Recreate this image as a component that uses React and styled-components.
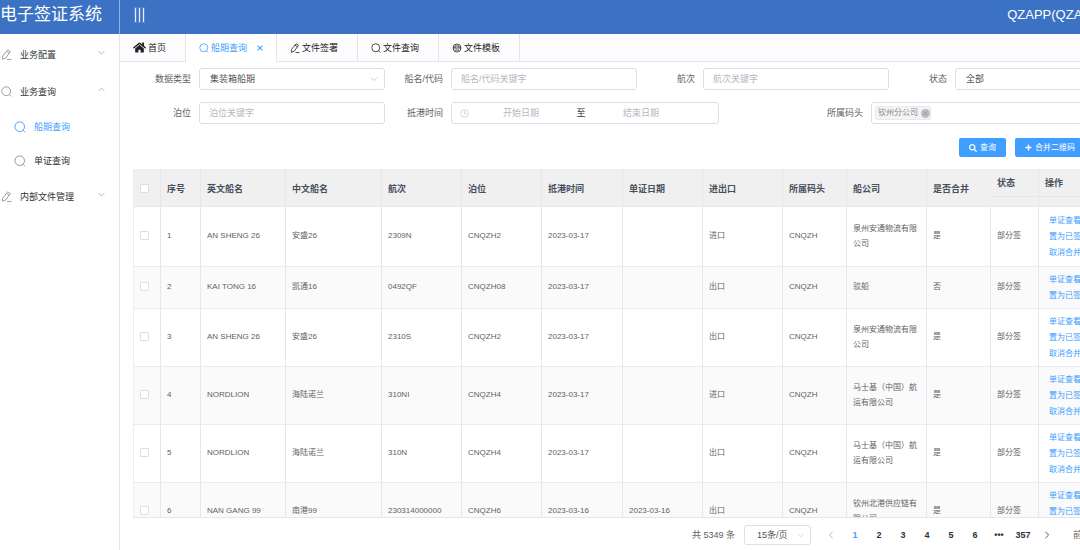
import React from 'react';
import styled, { createGlobalStyle, css } from 'styled-components';
import { FaHome, FaSearch, FaPlus } from 'react-icons/fa';

const GlobalStyle = createGlobalStyle`
  * { box-sizing: border-box; }
  body {
    margin: 0;
    background: #fff;
    color: #303133;
    font-family: "Liberation Sans", "Noto Sans CJK SC", sans-serif;
    font-size: 9px;
    line-height: 16px;
  }
  button, input, select { font: inherit; color: inherit; margin: 0; padding: 0; }
`;

const Shell = styled.div`
  height: 100vh;
  display: flex;
  flex-direction: column;
  overflow: hidden;
`;

const Header = styled.header`
  flex: none;
  display: flex;
  height: 34px;
  min-width: 1141px;
  background: #3b72c4;
  color: #fff;
`;

const Brand = styled.h1`
  flex: none;
  width: 120px;
  margin: 0;
  border-right: 1px solid #8fb2e4;
  font-size: 17px;
  font-weight: 400;
  line-height: 30px;
  white-space: nowrap;
`;

const MenuToggle = styled.button`
  display: flex;
  gap: 3px;
  align-items: center;
  height: 30px;
  margin-left: 15px;
  border: 0;
  background: none;
`;

const Bar = styled.span`
  width: 1px;
  height: 14px;
  background: #e3ecf8;
  outline: 1px solid rgba(255, 255, 255, 0.15);
`;

const UserName = styled.span`
  margin-left: auto;
  padding-right: 37px;
  font-size: 13px;
  line-height: 30px;
`;

const Body = styled.div`
  flex: 1;
  min-height: 0;
  display: flex;
`;

const Sidebar = styled.nav`
  flex: none;
  width: 120px;
  padding-top: 2px;
  border-right: 1px solid #e4e4e8;
`;

const MenuItem = styled.a`
  display: flex;
  align-items: center;
  gap: 8px;
  height: ${(p) => (p.$sub ? '34px' : '37px')};
  padding: ${(p) => (p.$sub ? '0 14px' : '0 14px 0 1px')};
  color: ${(p) => (p.$active ? '#409eff' : '#303133')};
  text-decoration: none;

  svg { color: ${(p) => (p.$active ? '#409eff' : '#909399')}; }
  svg:last-child { margin: 0 0 4px auto; }
  svg:first-child { margin: 0; }
`;

const Main = styled.main`
  flex: 1;
  min-width: 1021px;
  display: flex;
  flex-direction: column;
`;

const TabBar = styled.div`
  flex: none;
  display: flex;
  height: 28px;
  background: #fdfcfe;
  border-bottom: 1px solid #e4e4ea;
`;

const Tab = styled.button`
  display: flex;
  align-items: center;
  gap: 2px;
  height: ${(p) => (p.$active ? '28px' : '27px')};
  padding: ${(p) => (p.$active ? '0 13px' : '0 19px 0 13px')};
  border: 0;
  border-right: 1px solid #e4e4ea;
  background: ${(p) => (p.$active ? '#fff' : 'transparent')};
  color: ${(p) => (p.$active ? '#409eff' : '#222')};

  svg:last-child { margin-left: 8px; }
`;

const Content = styled.div`
  flex: 1;
  min-height: 0;
  display: flex;
  flex-direction: column;
  padding: 6px 0 0 13px;
`;

const Form = styled.form`
  flex: none;
  display: flex;
  flex-direction: column;
  gap: 12px;
`;

const FormRow = styled.div`
  display: grid;
  grid-template-columns: ${(p) => p.$columns};
`;

const Field = styled.div`
  display: grid;
  grid-template-columns: ${(p) => (p.$wide ? '144px' : '58px')} minmax(0, 1fr);
  column-gap: 8px;
  align-items: center;
`;

const Label = styled.label`
  padding-bottom: 1px;
  text-align: right;
  color: #606266;
`;

const box = css`
  width: 100%;
  height: 22px;
  border: 1px solid #dcdfe6;
  border-radius: 3px;
  background: #fff;
`;

const TextInput = styled.input`
  ${box}
  padding: 0 9px;
  &::placeholder { color: #b4b8c0; }
`;

const SelectWrap = styled.div`
  display: grid;
  align-items: center;

  select, svg { grid-area: 1 / 1; }
  svg { justify-self: end; margin-right: 7px; color: #c0c4cc; pointer-events: none; }
`;

const Select = styled.select`
  ${box}
  height: ${(p) => (p.$small ? '20px' : '22px')};
  padding: 0 ${(p) => (p.$small ? '12px' : '10px')};
  appearance: none;
  color: #505256;
`;

const DateRange = styled.div`
  ${box}
  display: flex;
  align-items: center;
  padding-left: 8px;
  svg { color: #c0c4cc; }
`;

const DateInput = styled.input`
  width: 104px;
  border: 0;
  background: none;
  text-align: center;
  &::placeholder { color: #b4b8c0; }
`;

const DateSeparator = styled.span`
  width: 16px;
  text-align: center;
`;

const TagBox = styled.div`
  ${box}
  display: flex;
  align-items: center;
  padding-left: 3px;
`;

const Tag = styled.span`
  display: flex;
  align-items: center;
  gap: 3px;
  height: 14px;
  padding: 0 0 0 2px;
  border: 1px solid #e9e9eb;
  border-radius: 2px;
  background: #f4f4f5;
  color: #85888e;
  font-size: 8px;
`;

const TagClose = styled.button`
  display: grid;
  place-items: center;
  width: 9px;
  height: 9px;
  border: 0;
  border-radius: 50%;
  background: #b9bdc6;
  color: #8f939b;
`;

const Actions = styled.div`
  grid-column: 4;
  display: flex;
  gap: 9px;
  padding: 2px 0 0 70px;
`;

const ActionButton = styled.button`
  flex: none;
  display: flex;
  align-items: center;
  gap: 3px;
  height: 19px;
  padding: 0 10px;
  border: 0;
  border-radius: 2px;
  background: #409eff;
  color: #fff;
  font-size: 8px;
`;

const TableArea = styled.div`
  flex: 1;
  min-height: 0;
  margin-top: 12px;
  overflow: hidden;
  border-left: 1px solid #ebeef5;
  border-bottom: 1px solid #e4e6ea;
`;

const Table = styled.table`
  width: 100%;
  min-width: 1007px;
  table-layout: fixed;
  border-collapse: separate;
  border-spacing: 0;
  color: #606266;
  font-size: 8px;
`;

const HeadCell = styled.th`
  height: 38px;
  padding: 2px 6px 0;
  border-right: 1px solid #e6e7ea;
  border-bottom: 1px solid #e6e7ea;
  background: #f0f0f1;
  color: #474f5c;
  font-size: 9px;
  text-align: left;
  white-space: nowrap;

  ${(p) => p.$fixed && css`
    padding: 0 0 9px;
    vertical-align: top;
  `}
  ${(p) => p.$open && css`border-right-color: #f0f0f1;`}
`;

const FixedLabel = styled.div`
  height: 28px;
  padding: 0 6px;
  border-bottom: 1px solid #e6e7ea;
  line-height: 28px;
`;

const Row = styled.tr`
  height: ${(p) => p.$height}px;
  background: ${(p) => (p.$striped ? '#fafafa' : '#fff')};
`;

const Cell = styled.td`
  padding: ${(p) => (p.$links ? '0 10px' : '0 6px 2px')};
  border-right: 1px solid #e6e7ea;
  border-bottom: 1px solid #ebecf2;
  line-height: ${(p) => (p.$links ? '16px' : '15px')};
`;

const Check = styled.input`
  display: block;
  appearance: none;
  width: 9px;
  height: 9px;
  border: 1px solid #dcdfe6;
  border-radius: 1px;
  background: #fff;
`;

const RowLink = styled.a`
  display: block;
  color: #409eff;
  text-decoration: none;
  white-space: nowrap;
`;

const Pager = styled.div`
  flex: none;
  display: flex;
  align-items: center;
  height: 32px;
  padding: 2px 0 0 559px;
  color: #606266;
  white-space: nowrap;
`;

const PageSize = styled.div`
  width: 67px;
  margin: 0 8px 0 9px;
`;

const PageButton = styled.button`
  flex: none;
  display: grid;
  place-items: center;
  width: 24px;
  height: 20px;
  border: 0;
  background: none;
  color: ${(p) => (p.$active ? '#409eff' : p.$muted ? '#a0a4ac' : '#303133')};
  font-weight: 700;
`;

const Jump = styled.span`
  margin-left: 14px;
`;

const Icon = ({ size = 10, children }) => (
  <svg width={size} height={size} viewBox="0 0 20 20" fill="none" stroke="currentColor" strokeWidth="1.6" aria-hidden="true">
    {children}
  </svg>
);

const SearchIcon = ({ size }) => (
  <Icon size={size}>
    <circle cx="9.5" cy="9.5" r="8" />
    <path d="M15 15.5 18.5 19" />
  </Icon>
);

const EditIcon = ({ size }) => (
  <Icon size={size}>
    <path d="M12 1.5 17 4.5 8.5 16.5 2.5 18.5 3 13Z M10 4.5 15 7.5 M11 19H19" />
  </Icon>
);

const TemplateIcon = ({ size }) => (
  <Icon size={size}>
    <circle cx="10" cy="10" r="8" />
    <path d="M2 10H18M6 10V6H14V10M6 14H14" />
  </Icon>
);

const ClockIcon = () => (
  <Icon size={9}>
    <circle cx="10" cy="10" r="8.5" />
    <path d="M10 4.5V10.5H15" />
  </Icon>
);

const Chevron = ({ dir = 'down', size = 8 }) => {
  const paths = {
    down: 'M2 6 10 14 18 6',
    up: 'M2 14 10 6 18 14',
    left: 'M14 2 6 10 14 18',
    right: 'M6 2 14 10 6 18',
  };
  return <Icon size={size}><path d={paths[dir]} strokeWidth="2" /></Icon>;
};

const CloseIcon = ({ size = 6 }) => (
  <Icon size={size}><path d="M2 2 18 18M18 2 2 18" strokeWidth="3.5" /></Icon>
);

const columns = [
  { width: 27 },
  { width: 40, title: '序号' },
  { width: 85, title: '英文船名' },
  { width: 96, title: '中文船名' },
  { width: 80, title: '航次' },
  { width: 80, title: '泊位' },
  { width: 81, title: '抵港时间' },
  { width: 80, title: '单证日期' },
  { width: 80, title: '进出口' },
  { width: 64, title: '所属码头' },
  { width: 80, title: '船公司' },
  { width: 64, title: '是否合并' },
  { width: 48, title: '状态', fixed: true },
  { width: 102, title: '操作', fixed: true },
];

const rows = [
  [60, 'AN SHENG 26', '安盛26', '2309N', 'CNQZH2', '2023-03-17', '', '进口', '泉州安通物流有限公司', '是'],
  [42, 'KAI TONG 16', '凯通16', '0492QF', 'CNQZH08', '2023-03-17', '', '出口', '驳船', '否'],
  [58, 'AN SHENG 26', '安盛26', '2310S', 'CNQZH2', '2023-03-17', '', '出口', '泉州安通物流有限公司', '是'],
  [58, 'NORDLION', '海陆诺兰', '310NI', 'CNQZH4', '2023-03-17', '', '进口', '马士基（中国）航运有限公司', '是'],
  [58, 'NORDLION', '海陆诺兰', '310N', 'CNQZH4', '2023-03-17', '', '出口', '马士基（中国）航运有限公司', '是'],
  [58, 'NAN GANG 99', '南港99', '230314000000', 'CNQZH6', '2023-03-16', '2023-03-16', '出口', '钦州北港供应链有限公司', '是'],
];

function ShipTable() {
  return (
    <TableArea>
      <Table>
        <colgroup>
          {columns.map((c, i) => <col key={i} width={c.width} />)}
        </colgroup>
        <thead>
          <tr>
            {columns.map((c, i) => (
              <HeadCell key={i} $fixed={c.fixed} $open={c.title === '是否合并'}>
                {i === 0 ? <Check type="checkbox" aria-label="全选" />
                  : c.fixed ? <FixedLabel>{c.title}</FixedLabel> : c.title}
              </HeadCell>
            ))}
          </tr>
        </thead>
        <tbody>
          {rows.map(([height, en, cn, voyage, berth, arrival, docDate, io, company, merged], i) => (
            <Row key={i} $height={height} $striped={i % 2 === 1}>
              <Cell><Check type="checkbox" aria-label={`选择 ${en}`} /></Cell>
              <Cell>{i + 1}</Cell>
              <Cell>{en}</Cell>
              <Cell>{cn}</Cell>
              <Cell>{voyage}</Cell>
              <Cell>{berth}</Cell>
              <Cell>{arrival}</Cell>
              <Cell>{docDate}</Cell>
              <Cell>{io}</Cell>
              <Cell>CNQZH</Cell>
              <Cell>{company}</Cell>
              <Cell>{merged}</Cell>
              <Cell>部分签</Cell>
              <Cell $links>
                <RowLink href="#docs">单证查看</RowLink>
                <RowLink href="#signed">置为已签</RowLink>
                {merged === '是' && <RowLink href="#unmerge">取消合并</RowLink>}
              </Cell>
            </Row>
          ))}
        </tbody>
      </Table>
    </TableArea>
  );
}

export default function App() {
  return (
    <Shell>
      <GlobalStyle />
      <Header>
        <Brand>电子签证系统</Brand>
        <MenuToggle type="button" aria-label="菜单"><Bar /><Bar /><Bar /></MenuToggle>
        <UserName>QZAPP(QZAPP)</UserName>
      </Header>
      <Body>
        <Sidebar>
          <MenuItem href="#config"><EditIcon size={11} />业务配置<Chevron size={7} /></MenuItem>
          <MenuItem href="#query"><SearchIcon size={11} />业务查询<Chevron size={7} dir="up" /></MenuItem>
          <MenuItem href="#ships" $sub $active><SearchIcon size={12} />船期查询</MenuItem>
          <MenuItem href="#certs" $sub><SearchIcon size={12} />单证查询</MenuItem>
          <MenuItem href="#files"><EditIcon size={11} />内部文件管理<Chevron size={7} /></MenuItem>
        </Sidebar>
        <Main>
          <TabBar>
            <Tab type="button"><FaHome size={13} /><span>首页</span></Tab>
            <Tab type="button" $active><SearchIcon /><span>船期查询</span><CloseIcon /></Tab>
            <Tab type="button"><EditIcon /><span>文件签署</span></Tab>
            <Tab type="button"><SearchIcon /><span>文件查询</span></Tab>
            <Tab type="button"><TemplateIcon /><span>文件模板</span></Tab>
          </TabBar>
          <Content>
            <Form>
              <FormRow $columns="repeat(4, minmax(252px, 1fr))">
                <Field>
                  <Label htmlFor="type">数据类型</Label>
                  <SelectWrap><Select id="type"><option>集装箱船期</option></Select><Chevron /></SelectWrap>
                </Field>
                <Field>
                  <Label htmlFor="ship">船名/代码</Label>
                  <TextInput id="ship" placeholder="船名/代码关键字" />
                </Field>
                <Field>
                  <Label htmlFor="voyage">航次</Label>
                  <TextInput id="voyage" placeholder="航次关键字" />
                </Field>
                <Field>
                  <Label htmlFor="status">状态</Label>
                  <SelectWrap><Select id="status"><option>全部</option></Select><Chevron /></SelectWrap>
                </Field>
              </FormRow>
              <FormRow $columns="minmax(252px, 1fr) 334px minmax(422px, 2fr)">
                <Field>
                  <Label htmlFor="berth">泊位</Label>
                  <TextInput id="berth" placeholder="泊位关键字" />
                </Field>
                <Field>
                  <Label htmlFor="from">抵港时间</Label>
                  <DateRange>
                    <ClockIcon />
                    <DateInput id="from" placeholder="开始日期" />
                    <DateSeparator>至</DateSeparator>
                    <DateInput aria-label="结束日期" placeholder="结束日期" />
                  </DateRange>
                </Field>
                <Field $wide>
                  <Label as="span">所属码头</Label>
                  <TagBox>
                    <Tag>钦州分公司<TagClose type="button" aria-label="移除"><CloseIcon size={5} /></TagClose></Tag>
                  </TagBox>
                </Field>
              </FormRow>
              <FormRow $columns="repeat(4, minmax(252px, 1fr))">
                <Actions>
                  <ActionButton type="button"><FaSearch size={8} />查询</ActionButton>
                  <ActionButton type="button"><FaPlus size={7} />合并二维码</ActionButton>
                </Actions>
              </FormRow>
            </Form>
            <ShipTable />
            <Pager>
              <span>共 5349 条</span>
              <PageSize>
                <SelectWrap><Select $small aria-label="每页条数"><option>15条/页</option></Select><Chevron size={7} /></SelectWrap>
              </PageSize>
              <PageButton type="button" $muted aria-label="上一页"><Chevron dir="left" /></PageButton>
              <PageButton type="button" $active>1</PageButton>
              {[2, 3, 4, 5, 6].map((n) => <PageButton type="button" key={n}>{n}</PageButton>)}
              <PageButton type="button">•••</PageButton>
              <PageButton type="button">357</PageButton>
              <PageButton type="button" aria-label="下一页"><Chevron dir="right" /></PageButton>
              <Jump>前往</Jump>
            </Pager>
          </Content>
        </Main>
      </Body>
    </Shell>
  );
}
